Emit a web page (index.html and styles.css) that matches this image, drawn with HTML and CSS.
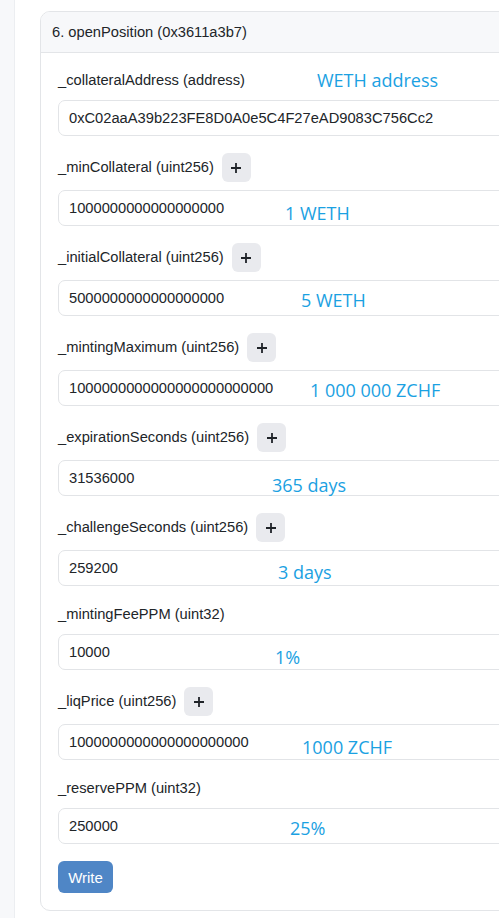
FILE: index.html
```html
<!DOCTYPE html>
<html>
<head>
<meta charset="utf-8">
<link rel="stylesheet" href="styles.css">
</head>
<body>
<div class="page">
  <aside class="side"></aside>
  <main class="main">
    <section class="card">
      <header class="card-head">6. openPosition (0x3611a3b7)</header>
      <div class="card-body">
        <div class="field">
          <div class="label-row"><label class="label">_collateralAddress (address)</label></div>
          <div class="input">0xC02aaA39b223FE8D0A0e5C4F27eAD9083C756Cc2</div>
          <span class="note note-1">WETH address</span>
        </div>
        <div class="field">
          <div class="label-row"><label class="label">_minCollateral (uint256)</label><button class="plus"><svg width="12" height="12" viewBox="0 0 12 12"><path d="M6 1v10M1 6h10" stroke="#1f2328" stroke-width="1.8"/></svg></button></div>
          <div class="input">1000000000000000000</div>
          <span class="note note-2">1 WETH</span>
        </div>
        <div class="field">
          <div class="label-row"><label class="label">_initialCollateral (uint256)</label><button class="plus"><svg width="12" height="12" viewBox="0 0 12 12"><path d="M6 1v10M1 6h10" stroke="#1f2328" stroke-width="1.8"/></svg></button></div>
          <div class="input">5000000000000000000</div>
          <span class="note note-3">5 WETH</span>
        </div>
        <div class="field">
          <div class="label-row"><label class="label">_mintingMaximum (uint256)</label><button class="plus"><svg width="12" height="12" viewBox="0 0 12 12"><path d="M6 1v10M1 6h10" stroke="#1f2328" stroke-width="1.8"/></svg></button></div>
          <div class="input">1000000000000000000000000</div>
          <span class="note note-4">1 000 000 ZCHF</span>
        </div>
        <div class="field">
          <div class="label-row"><label class="label">_expirationSeconds (uint256)</label><button class="plus"><svg width="12" height="12" viewBox="0 0 12 12"><path d="M6 1v10M1 6h10" stroke="#1f2328" stroke-width="1.8"/></svg></button></div>
          <div class="input">31536000</div>
          <span class="note note-5">365 days</span>
        </div>
        <div class="field">
          <div class="label-row"><label class="label">_challengeSeconds (uint256)</label><button class="plus"><svg width="12" height="12" viewBox="0 0 12 12"><path d="M6 1v10M1 6h10" stroke="#1f2328" stroke-width="1.8"/></svg></button></div>
          <div class="input">259200</div>
          <span class="note note-6">3 days</span>
        </div>
        <div class="field">
          <div class="label-row"><label class="label">_mintingFeePPM (uint32)</label></div>
          <div class="input">10000</div>
          <span class="note note-7">1%</span>
        </div>
        <div class="field">
          <div class="label-row"><label class="label">_liqPrice (uint256)</label><button class="plus"><svg width="12" height="12" viewBox="0 0 12 12"><path d="M6 1v10M1 6h10" stroke="#1f2328" stroke-width="1.8"/></svg></button></div>
          <div class="input">1000000000000000000000</div>
          <span class="note note-8">1000 ZCHF</span>
        </div>
        <div class="field">
          <div class="label-row"><label class="label">_reservePPM (uint32)</label></div>
          <div class="input">250000</div>
          <span class="note note-9">25%</span>
        </div>
        <button class="write">Write</button>
      </div>
    </section>
  </main>
</div>
</body>
</html>
```
FILE: styles.css
```css
html, body {
  margin: 0;
  padding: 0;
  background: #ffffff;
  overflow: hidden;
}
body {
  font-family: "Liberation Sans", Arial, sans-serif;
  color: #212529;
  width: 499px;
  height: 918px;
}
.page {
  display: flex;
  height: 918px;
  width: 499px;
}
.side {
  width: 14px;
  flex: none;
  background: #f7f8fa;
  border-right: 1px solid #eceef1;
}
.main {
  flex: 1;
  min-width: 0;
  overflow: hidden;
  padding: 11px 0 0 25px;
}
.card {
  width: 620px;
  border: 1px solid #e3e5e8;
  border-radius: 10px;
  overflow: hidden;
  background: #fff;
}
.card-head {
  height: 40px;
  display: flex;
  align-items: center;
  padding-left: 11px;
  background: #f7f8fa;
  border-bottom: 1px solid #e3e5e8;
  font-size: 14.7px;
}
.card-body {
  padding: 16px 0 17px 17px;
}
.field {
  position: relative;
  margin-bottom: 17px;
}
.label-row {
  display: flex;
  align-items: center;
  gap: 8px;
  min-height: 23px;
  margin-bottom: 8px;
}
.label {
  font-size: 14.7px;
  line-height: 23px;
}
.plus {
  width: 29px;
  height: 29px;
  border: none;
  border-radius: 6px;
  background: #e9eaee;
  display: flex;
  align-items: center;
  justify-content: center;
  padding: 0;
}
.input {
  height: 36px;
  box-sizing: border-box;
  border: 1px solid #e2e4e7;
  border-radius: 7px;
  padding: 0 10px;
  display: flex;
  align-items: center;
  font-size: 14.7px;
  color: #212529;
}
.note {
  position: absolute;
  font-family: "Open Sans", "Noto Sans", sans-serif;
  font-size: 18px;
  line-height: 24px;
  color: #1ba1e2;
  white-space: nowrap;
}
.note-1 { left: 259px; top: -1px; }
.note-2 { left: 227px; top: 48px; }
.note-3 { left: 243px; top: 45px; }
.note-4 { left: 252px; top: 45px; }
.note-5 { left: 214px; top: 50px; }
.note-6 { left: 220px; top: 47px; }
.note-7 { left: 217px; top: 42px; }
.note-8 { left: 244px; top: 48px; }
.note-9 { left: 232px; top: 39px; }
.write {
  display: block;
  margin-top: 1px;
  width: 55px;
  height: 32px;
  border: none;
  border-radius: 6px;
  background: #4f86c6;
  color: #fff;
  font-family: "Liberation Sans", Arial, sans-serif;
  font-size: 15px;
  padding: 0;
}
```
